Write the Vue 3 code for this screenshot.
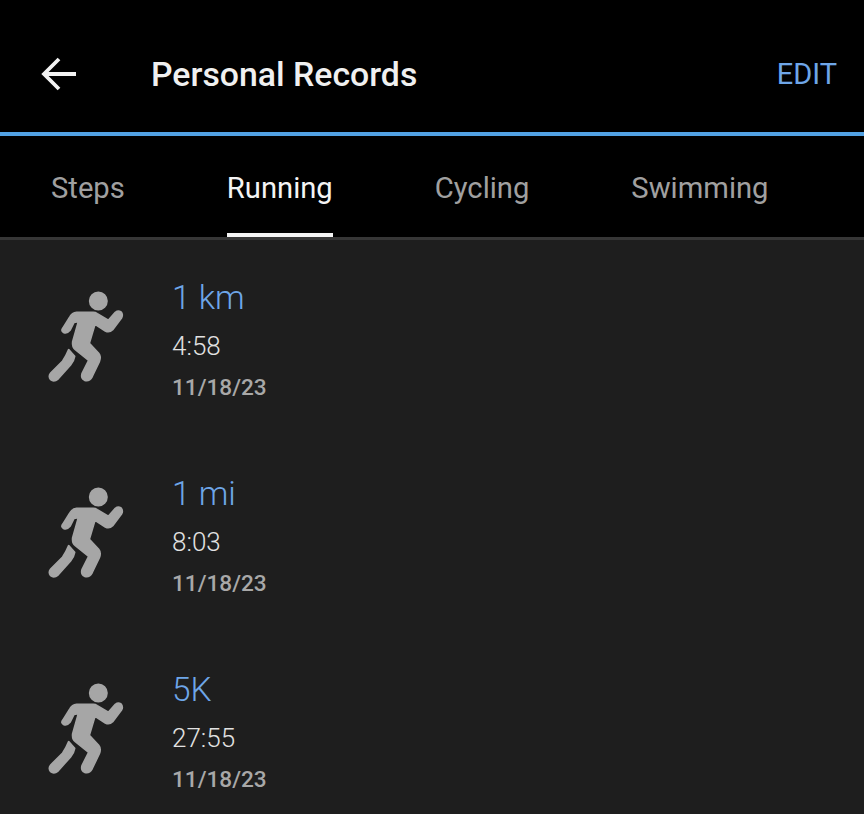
<script setup>
const tabs = ['Steps', 'Running', 'Cycling', 'Swimming']
const records = [
  { name: '1 km', time: '4:58', date: '11/18/23' },
  { name: '1 mi', time: '8:03', date: '11/18/23' },
  { name: '5K', time: '27:55', date: '11/18/23' },
]
</script>

<template>
  <div class="screen">
    <header class="appbar">
      <svg class="back" viewBox="0 0 36 36" width="36" height="36" aria-hidden="true">
        <path d="M35 18H3M18 3 3 18l15 15" fill="none" stroke="#f2f2f2" stroke-width="3.8" />
      </svg>
      <h1 class="title">Personal Records</h1>
      <span class="edit">EDIT</span>
    </header>
    <nav class="tabs">
      <span v-for="t in tabs" :key="t" class="tab" :class="{ active: t === 'Running' }">{{ t }}</span>
    </nav>
    <main class="list">
      <section v-for="r in records" :key="r.name" class="row">
        <svg class="runner" viewBox="0 0 270 315" width="90" height="105" aria-hidden="true">
          <circle cx="175" cy="48" r="26" />
          <path d="M68 130L90 95Q96 84 110 82L160 82Q166 82 172 86L205 106L226 82Q234 76 242 80Q250 88 245 98L218 134Q208 144 196 138L165 118L148 175L176 205Q184 215 178 230L156 276Q148 290 134 286Q122 280 126 266L146 226L106 194Q96 186 98 170L115 110L102 112L90 136Q82 146 72 143Q62 138 68 130Z" />
          <path d="M86 194L104 214Q102 226 93 238L54 282Q42 292 32 284Q24 274 32 264L68 228Q78 214 86 194Z" />
        </svg>
        <div class="info">
          <div class="name">{{ r.name }}</div>
          <div class="time">{{ r.time }}</div>
          <div class="date">{{ r.date }}</div>
        </div>
      </section>
    </main>
  </div>
</template>

<style>
html, body { margin: 0; background: #1e1e1e; }
</style>

<style scoped>
.screen {
  width: 864px;
  height: 814px;
  overflow: hidden;
  background: #1e1e1e;
  font-family: Roboto, "Liberation Sans", sans-serif;
}
.appbar {
  height: 116px;
  background: #000;
  border-bottom: 4px solid #52a2e4;
  display: flex;
  align-items: center;
  padding: 16px 27px 0 41px;
}
.back { flex: none; }
.title {
  margin: 2px 0 0 74px;
  font-size: 33.8px;
  font-weight: 500;
  line-height: 1;
  color: #f0f0f0;
  flex: 1;
}
.edit {
  font-size: 29px;
  color: #6ea6e8;
}
.tabs {
  height: 101px;
  background: #000;
  border-bottom: 3px solid #363636;
  display: flex;
  gap: 102px;
  padding-left: 51px;
}
.tab {
  height: 97px;
  line-height: 104px;
  font-size: 29.2px;
  color: #a0a0a0;
  border-bottom: 4px solid transparent;
}
.tab.active {
  color: #f4f4f4;
  border-bottom-color: #f4f4f4;
}
.row {
  height: 196px;
  box-sizing: border-box;
  display: flex;
  padding: 45px 0 0 40px;
}
.runner {
  flex: none;
  fill: #a6a6a6;
  stroke: #a6a6a6;
  stroke-width: 5;
  stroke-linejoin: round;
}
.info {
  margin-left: 42px;
  margin-top: -9px;
}
.name {
  font-size: 33.4px;
  font-weight: 300;
  color: #6ea6e8;
  line-height: 44px;
}
.time {
  font-size: 26px;
  font-weight: 300;
  color: #e2e2e2;
  line-height: 40px;
  margin-top: 6px;
}
.date {
  font-size: 22.6px;
  font-weight: 500;
  color: #a8a8a8;
  line-height: 40px;
  margin-top: 2px;
}
</style>
